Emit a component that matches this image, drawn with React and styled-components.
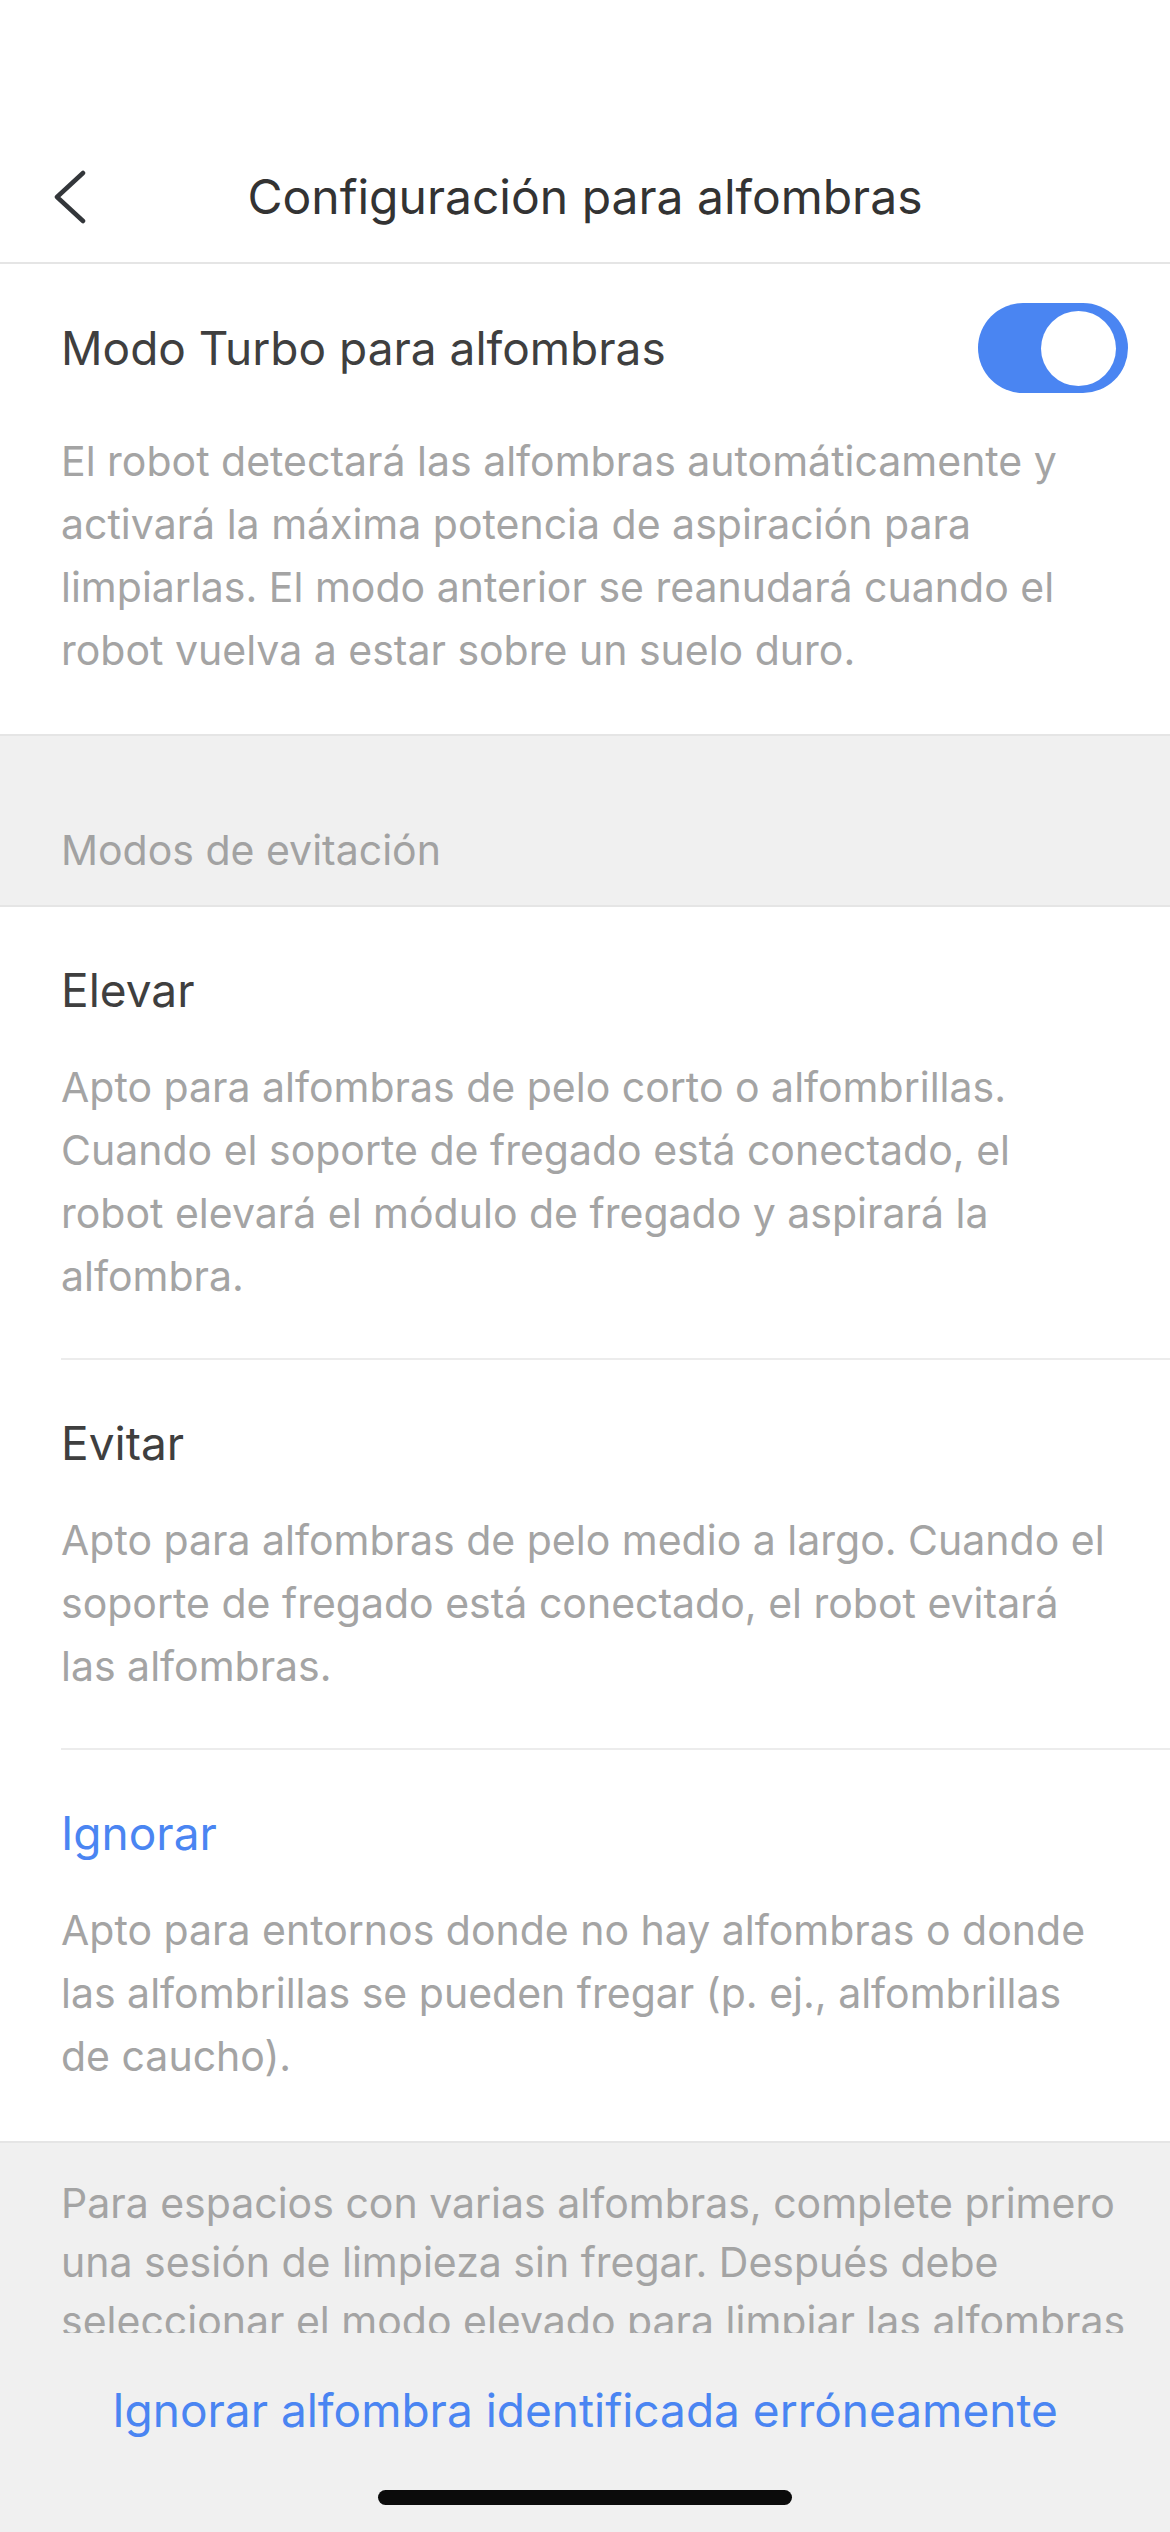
import React from "react";
import styled, { createGlobalStyle } from "styled-components";

const GlobalStyle = createGlobalStyle`
  html, body {
    margin: 0;
    padding: 0;
    background: #ffffff;
  }
  body {
    font-family: Inter, "Liberation Sans", Arial, sans-serif;
    -webkit-font-smoothing: antialiased;
  }
  * { box-sizing: border-box; }
`;

const BLUE = "#4a85f2";
const GRAY_TEXT = "#a4a4a4";
const DARK = "#3f3f3f";
const LINE = "#e5e5e5";
const BG = "#f0f0f0";

const Page = styled.div`
  width: 1170px;
  min-height: 2532px;
  background: ${BG};
  display: flex;
  flex-direction: column;
`;

const StatusSpacer = styled.div`
  height: 134px;
  background: #fff;
`;

const NavBar = styled.header`
  height: 130px;
  background: #fff;
  border-bottom: 2px solid ${LINE};
  display: grid;
  grid-template-columns: 1fr auto 1fr;
  align-items: center;
  padding-bottom: 2px;
`;

const BackButton = styled.button`
  justify-self: start;
  margin-left: 48px;
  width: 44px;
  height: 60px;
  padding: 0;
  border: none;
  background: none;
  display: flex;
  align-items: center;
  justify-content: center;
  cursor: pointer;
`;

const NavTitle = styled.h1`
  margin: 0;
  font-size: 48px;
  line-height: 60px;
  font-weight: 400;
  color: #333333;
  white-space: nowrap;
`;

const WhiteSection = styled.section`
  background: #fff;
  padding: 39px 42px 52px 61px;
`;

const ToggleRow = styled.div`
  display: flex;
  align-items: center;
  justify-content: space-between;
  height: 90px;
`;

const RowTitle = styled.div`
  font-size: 46px;
  line-height: 60px;
  color: ${(p) => p.$color || DARK};
  white-space: nowrap;
`;

const SwitchTrack = styled.div`
  width: 150px;
  height: 90px;
  border-radius: 45px;
  background: ${(p) => (p.$on ? BLUE : "#e3e3e3")};
  display: flex;
  align-items: center;
  justify-content: ${(p) => (p.$on ? "flex-end" : "flex-start")};
  padding: 0 12px 0 8px;
`;

const SwitchKnob = styled.div`
  width: 75px;
  height: 75px;
  border-radius: 50%;
  background: #fff;
`;

const Description = styled.p`
  margin: ${(p) => p.$mt || 36}px 0 0;
  font-size: 41px;
  line-height: 63px;
  color: ${GRAY_TEXT};
  white-space: nowrap;
`;

const GroupHeader = styled.div`
  background: ${BG};
  border-top: 2px solid ${LINE};
  border-bottom: 2px solid ${LINE};
  padding: 84px 61px 25px;
  font-size: 41px;
  line-height: 60px;
  color: #a2a2a2;
`;

const OptionList = styled.div`
  background: #fff;
  padding-left: 61px;
  border-bottom: 2px solid ${LINE};
`;

const OptionItem = styled.div`
  padding: 53px 42px ${(p) => (p.$last ? 53 : 50)}px 0;
  border-bottom: ${(p) => (p.$last ? "none" : "2px solid #ececec")};
`;

const FooterNote = styled.div`
  height: 190px;
  overflow: hidden;
  padding: 31px 42px 0 61px;
  font-size: 41px;
  line-height: 59px;
  color: ${GRAY_TEXT};
  white-space: nowrap;
`;

const FooterLink = styled.a`
  margin-top: 47px;
  align-self: center;
  font-size: 46px;
  line-height: 60px;
  color: ${BLUE};
  text-decoration: none;
  white-space: nowrap;
`;

const HomeIndicator = styled.div`
  margin: 50px auto 26px;
  width: 414px;
  height: 15px;
  border-radius: 8px;
  background: #0b0b0b;
`;

const Lines = ({ lines }) =>
  lines.map((l, i) => (
    <React.Fragment key={i}>
      {l}
      {i < lines.length - 1 && <br />}
    </React.Fragment>
  ));

const Chevron = () => (
  <svg width="36" height="54" viewBox="0 0 36 54" fill="none">
    <path
      d="M31 3 L5 27 L31 51"
      stroke="#33363a"
      strokeWidth="4.5"
      strokeLinecap="round"
      strokeLinejoin="round"
    />
  </svg>
);

const options = [
  {
    title: "Elevar",
    lines: [
      "Apto para alfombras de pelo corto o alfombrillas.",
      "Cuando el soporte de fregado está conectado, el",
      "robot elevará el módulo de fregado y aspirará la",
      "alfombra.",
    ],
  },
  {
    title: "Evitar",
    lines: [
      "Apto para alfombras de pelo medio a largo. Cuando el",
      "soporte de fregado está conectado, el robot evitará",
      "las alfombras.",
    ],
  },
  {
    title: "Ignorar",
    selected: true,
    lines: [
      "Apto para entornos donde no hay alfombras o donde",
      "las alfombrillas se pueden fregar (p. ej., alfombrillas",
      "de caucho).",
    ],
  },
];

export default function App() {
  return (
    <>
      <GlobalStyle />
      <Page>
        <StatusSpacer />
        <NavBar>
          <BackButton aria-label="Atrás">
            <Chevron />
          </BackButton>
          <NavTitle>Configuración para alfombras</NavTitle>
          <div />
        </NavBar>

        <WhiteSection>
          <ToggleRow>
            <RowTitle>Modo Turbo para alfombras</RowTitle>
            <SwitchTrack $on>
              <SwitchKnob />
            </SwitchTrack>
          </ToggleRow>
          <Description $mt={37}>
            <Lines
              lines={[
                "El robot detectará las alfombras automáticamente y",
                "activará la máxima potencia de aspiración para",
                "limpiarlas. El modo anterior se reanudará cuando el",
                "robot vuelva a estar sobre un suelo duro.",
              ]}
            />
          </Description>
        </WhiteSection>

        <GroupHeader>Modos de evitación</GroupHeader>

        <OptionList>
          {options.map((o, i) => (
            <OptionItem key={o.title} $last={i === options.length - 1}>
              <RowTitle $color={o.selected ? BLUE : DARK}>{o.title}</RowTitle>
              <Description>
                <Lines lines={o.lines} />
              </Description>
            </OptionItem>
          ))}
        </OptionList>

        <FooterNote>
          <Lines
            lines={[
              "Para espacios con varias alfombras, complete primero",
              "una sesión de limpieza sin fregar. Después debe",
              "seleccionar el modo elevado para limpiar las alfombras",
            ]}
          />
        </FooterNote>

        <FooterLink href="#">Ignorar alfombra identificada erróneamente</FooterLink>

        <HomeIndicator />
      </Page>
    </>
  );
}
